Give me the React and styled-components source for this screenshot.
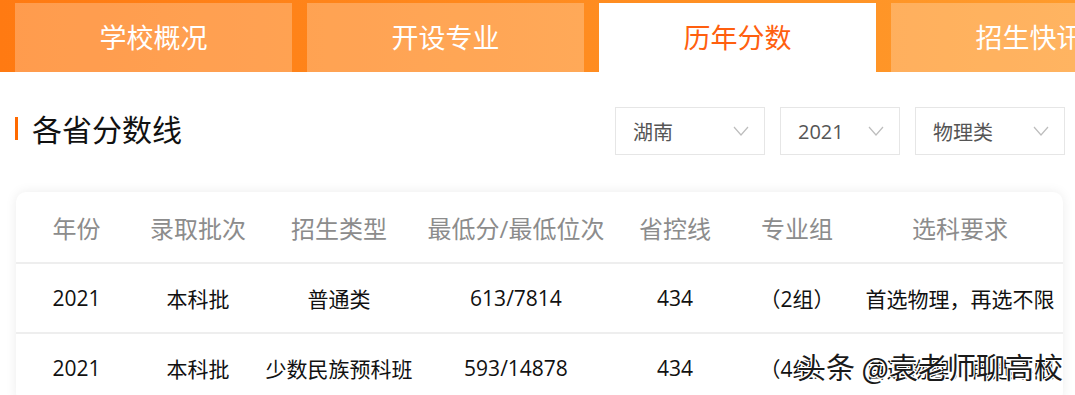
import React from 'react';
import styled, { createGlobalStyle } from 'styled-components';

const GlobalStyle = createGlobalStyle`
  html, body {
    margin: 0;
    padding: 0;
    background: #fff;
    font-family: "Open Sans", "Noto Sans CJK SC", sans-serif;
  }
`;

const Page = styled.div`
  width: 1075px;
  height: 395px;
  overflow: hidden;
  position: relative;
  background: #fff;
`;

const TabBar = styled.div`
  display: flex;
  gap: 15px;
  height: 72px;
  padding: 3px 0 0 15px;
  box-sizing: border-box;
  background: linear-gradient(to right, #ff7a12, #ff9b2c);
  overflow: hidden;
`;

const Tab = styled.div`
  flex: 0 0 277px;
  display: flex;
  align-items: center;
  justify-content: center;
  padding-bottom: 2px;
  box-sizing: border-box;
  font-family: "Noto Sans CJK SC", sans-serif;
  font-size: 27px;
  color: ${(p) => (p.$active ? '#ff5f0f' : '#fff')};
  background: ${(p) => (p.$active ? '#fff' : 'rgba(255,255,255,0.25)')};
`;

const Content = styled.div`
  padding: 35px 10px 0 16px;
`;

const HeadRow = styled.div`
  display: flex;
  align-items: center;
  justify-content: space-between;
  height: 48px;
`;

const Title = styled.h2`
  margin: 0 0 6px -1px;
  display: flex;
  align-items: center;
  gap: 14px;
  font-family: "Noto Sans CJK SC", sans-serif;
  font-weight: 400;
  font-size: 30px;
  color: #111;

  &::before {
    content: '';
    width: 3px;
    height: 23px;
    background: #ff6a00;
  }
`;

const Filters = styled.div`
  display: flex;
  gap: 15px;
`;

const Select = styled.div`
  width: ${(p) => p.$w}px;
  height: 48px;
  box-sizing: border-box;
  border: 1px solid #e6e6e6;
  display: flex;
  align-items: center;
  justify-content: space-between;
  padding: 0 15px 0 17px;
  font-size: 20px;
  color: #555;
`;

const Card = styled.div`
  margin-top: 37px;
  width: 1047px;
  background: #fff;
  border-radius: 10px;
  box-shadow: 0 0 12px rgba(0, 0, 0, 0.08);
`;

const Row = styled.div`
  display: grid;
  grid-template-columns: 121px 122px 160px 194px 124px 120px 206px;
  height: ${(p) => (p.$head ? 70 : 68)}px;
  align-items: center;
  border-top: ${(p) => (p.$head ? 'none' : '2px solid #eeeeee')};
`;

const Cell = styled.div`
  text-align: center;
  white-space: nowrap;
  font-size: ${(p) => (p.$head ? 24 : 21)}px;
  color: ${(p) => (p.$head ? '#8c8c8c' : '#111')};
`;

const Watermark = styled.div`
  position: absolute;
  right: 12px;
  bottom: 8px;
  font-family: "Noto Sans CJK SC", sans-serif;
  font-size: 29px;
  color: #1a1a1a;
  text-shadow: 1px 1px 0 #fff, -1px -1px 0 #fff, 1px -1px 0 #fff, -1px 1px 0 #fff;
`;

const Chevron = () => (
  <svg width="16" height="10" viewBox="0 0 16 10">
    <polyline points="1,1 8,9 15,1" fill="none" stroke="#bdbdbd" strokeWidth="1.2" />
  </svg>
);

const tabs = ['学校概况', '开设专业', '历年分数', '招生快讯'];
const filters = [
  { label: '湖南', w: 150 },
  { label: '2021', w: 120 },
  { label: '物理类', w: 150 },
];
const head = ['年份', '录取批次', '招生类型', '最低分/最低位次', '省控线', '专业组', '选科要求'];
const rows = [
  ['2021', '本科批', '普通类', '613/7814', '434', '（2组）', '首选物理，再选不限'],
  ['2021', '本科批', '少数民族预科班', '593/14878', '434', '（4组）', '首选物理，再选不限'],
];

const App = () => (
  <Page>
    <GlobalStyle />
    <TabBar>
      {tabs.map((t) => (
        <Tab key={t} $active={t === '历年分数'}>{t}</Tab>
      ))}
    </TabBar>
    <Content>
      <HeadRow>
        <Title>各省分数线</Title>
        <Filters>
          {filters.map((f) => (
            <Select key={f.label} $w={f.w}>
              <span>{f.label}</span>
              <Chevron />
            </Select>
          ))}
        </Filters>
      </HeadRow>
      <Card>
        <Row $head>
          {head.map((h) => (
            <Cell key={h} $head>{h}</Cell>
          ))}
        </Row>
        {rows.map((r, i) => (
          <Row key={i}>
            {r.map((c, j) => (
              <Cell key={j}>{c}</Cell>
            ))}
          </Row>
        ))}
      </Card>
    </Content>
    <Watermark>头条 @袁老师聊高校</Watermark>
  </Page>
);

export default App;
